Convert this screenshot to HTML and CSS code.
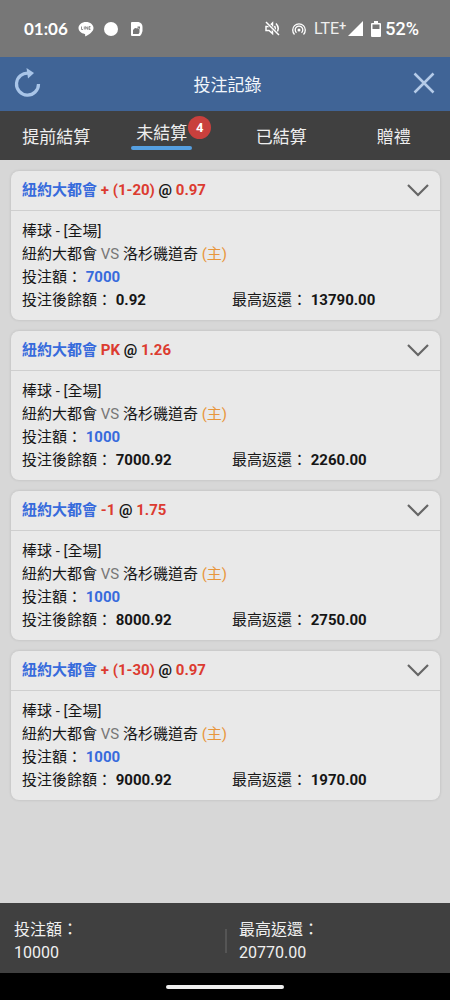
FILE: index.html
```html
<!DOCTYPE html>
<html lang="zh-Hant">
<head>
<meta charset="utf-8">
<meta name="viewport" content="width=device-width, initial-scale=1">
<title>投注記錄</title>
<link rel="stylesheet" href="styles.css">
</head>
<body>
<div class="status-bar">
  <div class="status-left">
    <span class="clock">01:06</span>
    <svg class="line-icon" width="16" height="16" viewBox="0 0 16 16"><path d="M8 1C3.800 1 .5 3.700.5 7c0 3 2.600 5.300 6.200 5.900.7.200.5.800.4 2.100.1.600.6.300 1 .1 2.500-1.400 7.400-4.300 7.400-8.100C15.500 3.700 12.200 1 8 1Z" fill="#fff"/><path d="M3.500 5.500v3H5M6.300 5.500v3M7.700 8.500v-3l2 3v-3M12.500 5.500H11v3h1.500M11 7h1.300" fill="none" stroke="#777" stroke-width=".8"/></svg>
    <svg width="14" height="14" viewBox="0 0 14 14"><circle cx="7" cy="7" r="7" fill="#fff"/></svg>
    <svg class="doc-icon" width="12" height="14" viewBox="0 0 12 14"><path d="M1 0h6.500Q11.500 1 11.500 5v4l-1 3L9 14H1a1 1 0 0 1-1-1V1a1 1 0 0 1 1-1Z" fill="#fff"/><path d="M2 8 4 6l2.500.5V4.500H9v2L8.500 8v2.500L7.500 12H2Z" fill="#777"/><path d="M6.500 5.500 9 7.500" stroke="#ddd" stroke-width=".8"/></svg>
  </div>
  <div class="status-right">
    <svg class="mute-icon" width="15" height="15" viewBox="0 0 15 15" fill="none" stroke="#fff" stroke-width="1.500"><path d="M1 5.500h3l3.500-3.500v10.500L4 9.500H1ZM9.500 5q1.500 2.500 0 5M11 2.500q4.500 5 0 10"/><path d="M1 1l13 13" stroke="#777" stroke-width="3"/><path d="M1 1l13 13"/></svg>
    <svg class="cast-icon" width="14" height="14" viewBox="0 0 14 14" fill="none" stroke="#fff" stroke-width="1.300"><path d="M2.500 12.500a6.300 6.300 0 1 1 9 0M4.500 10.700a3.800 3.800 0 1 1 5 0"/><circle cx="7" cy="8" r="1.500" fill="#fff" stroke="none"/></svg>
    <span class="network">LTE<sup>+</sup></span>
    <svg class="signal-icon" width="15" height="15" viewBox="0 0 15 15"><path d="M15 0v15H0Z" fill="#fff"/></svg>
    <svg class="battery-icon" width="10" height="16" viewBox="0 0 10 16"><path d="M3 0h4v2h2a1 1 0 0 1 1 1v12a1 1 0 0 1-1 1H1a1 1 0 0 1-1-1V3a1 1 0 0 1 1-1h2Z" fill="#fff"/><path d="M1.500 3.500h7V8h-7Z" fill="#777"/></svg>
    <span class="percent">52%</span>
  </div>
</div>

<header class="title-bar">
  <button class="icon-button" aria-label="重新整理"><svg width="28" height="30" viewBox="0 0 28 30"><path d="M15 5.200A11 11 0 1 0 24.500 16" fill="none" stroke="#a9c5e8" stroke-width="3.200"/><path d="M12.500 0l7.500 5-6 5.500Z" fill="#a9c5e8"/></svg></button>
  <h1>投注記錄</h1>
  <button class="icon-button" aria-label="關閉"><svg width="22" height="22" viewBox="0 0 22 22"><path d="M1.500 1.500l19 19M20.500 1.500l-19 19" stroke="#b5cbe8" stroke-width="2.500"/></svg></button>
</header>

<nav class="tabs">
  <button class="tab">提前結算</button>
  <button class="tab active"><span class="tab-label">未結算<span class="badge">4</span></span></button>
  <button class="tab">已結算</button>
  <button class="tab">贈禮</button>
</nav>

<main class="bets">
  <article class="bet">
    <div class="bet-head">
      <h2><span class="team">紐約大都會</span> <span class="odds">+ (1-20)</span> @ <span class="odds">0.97</span></h2>
      <button class="toggle" aria-label="展開"><svg width="22" height="13" viewBox="0 0 22 13"><path d="M1 1l10 10L21 1" fill="none" stroke="#666" stroke-width="2.200"/></svg></button>
    </div>
    <div class="bet-body">
      <p>棒球 - [全場]</p>
      <p>紐約大都會 <span class="versus">VS</span> 洛杉磯道奇 <span class="home">(主)</span></p>
      <p>投注額： <b class="stake">7000</b></p>
      <div class="amounts"><p>投注後餘額： <b>0.92</b></p><p>最高返還： <b>13790.00</b></p></div>
    </div>
  </article>
  <article class="bet">
    <div class="bet-head">
      <h2><span class="team">紐約大都會</span> <span class="odds">PK</span> @ <span class="odds">1.26</span></h2>
      <button class="toggle" aria-label="展開"><svg width="22" height="13" viewBox="0 0 22 13"><path d="M1 1l10 10L21 1" fill="none" stroke="#666" stroke-width="2.200"/></svg></button>
    </div>
    <div class="bet-body">
      <p>棒球 - [全場]</p>
      <p>紐約大都會 <span class="versus">VS</span> 洛杉磯道奇 <span class="home">(主)</span></p>
      <p>投注額： <b class="stake">1000</b></p>
      <div class="amounts"><p>投注後餘額： <b>7000.92</b></p><p>最高返還： <b>2260.00</b></p></div>
    </div>
  </article>
  <article class="bet">
    <div class="bet-head">
      <h2><span class="team">紐約大都會</span> <span class="odds">-1</span> @ <span class="odds">1.75</span></h2>
      <button class="toggle" aria-label="展開"><svg width="22" height="13" viewBox="0 0 22 13"><path d="M1 1l10 10L21 1" fill="none" stroke="#666" stroke-width="2.200"/></svg></button>
    </div>
    <div class="bet-body">
      <p>棒球 - [全場]</p>
      <p>紐約大都會 <span class="versus">VS</span> 洛杉磯道奇 <span class="home">(主)</span></p>
      <p>投注額： <b class="stake">1000</b></p>
      <div class="amounts"><p>投注後餘額： <b>8000.92</b></p><p>最高返還： <b>2750.00</b></p></div>
    </div>
  </article>
  <article class="bet">
    <div class="bet-head">
      <h2><span class="team">紐約大都會</span> <span class="odds">+ (1-30)</span> @ <span class="odds">0.97</span></h2>
      <button class="toggle" aria-label="展開"><svg width="22" height="13" viewBox="0 0 22 13"><path d="M1 1l10 10L21 1" fill="none" stroke="#666" stroke-width="2.200"/></svg></button>
    </div>
    <div class="bet-body">
      <p>棒球 - [全場]</p>
      <p>紐約大都會 <span class="versus">VS</span> 洛杉磯道奇 <span class="home">(主)</span></p>
      <p>投注額： <b class="stake">1000</b></p>
      <div class="amounts"><p>投注後餘額： <b>9000.92</b></p><p>最高返還： <b>1970.00</b></p></div>
    </div>
  </article>
</main>

<footer class="totals">
  <div class="total"><p>投注額：</p><p>10000</p></div>
  <div class="total last"><p>最高返還：</p><p>20770.00</p></div>
</footer>
<div class="gesture-bar"><div class="handle"></div></div>
</body>
</html>
```
FILE: styles.css
```css
* { box-sizing: border-box; }

body {
  margin: 0;
  min-height: 100vh;
  display: flex;
  flex-direction: column;
  background: #d7d7d7;
  color: #161616;
  font-family: Roboto, "Noto Sans CJK TC", sans-serif;
  font-size: 15px;
}

h1, h2, p { margin: 0; }
svg { display: block; flex: none; }
button {
  padding: 0;
  border: 0;
  background: none;
  color: inherit;
  font: inherit;
}

.status-bar {
  display: flex;
  justify-content: space-between;
  align-items: center;
  height: 57px;
  padding: 0 31px 0 24px;
  background: #777;
  color: #fff;
}
.status-left, .status-right { display: flex; align-items: center; }
.clock { font-family: Lato, sans-serif; font-size: 17px; font-weight: 700; }
.status-left { gap: 10px; }
.doc-icon { margin-left: 3px; }
.cast-icon { margin-left: 12px; }
.network { margin-left: 8px; font-size: 16px; line-height: 20px; color: #eee; }
.network sup { font-size: 13px; line-height: 0; vertical-align: 4px; font-weight: 500; }
.signal-icon { margin-left: 2px; }
.battery-icon { margin-left: 8px; }
.percent { margin-left: 4px; font-size: 18px; font-weight: 500; }

.title-bar {
  display: flex;
  justify-content: space-between;
  align-items: center;
  height: 54px;
  padding: 0 15px 2px 14px;
  background: #406496;
  color: #f2f6fb;
}
.title-bar h1 { font-size: 17px; font-weight: 400; }
.icon-button { display: flex; align-items: center; }

.tabs {
  display: grid;
  grid-template-columns: repeat(4, 1fr);
  height: 49px;
  background: #404040;
  color: #eee;
  font-size: 17px;
}
.active { padding: 0 14px 5px 0; }
.tab-label {
  position: relative;
  display: inline-block;
  padding: 0 5px;
  line-height: 28px;
}
.tab-label::after {
  content: "";
  position: absolute;
  left: 0;
  right: 0;
  bottom: -3px;
  height: 4px;
  border-radius: 2px;
  background: #559fe0;
}
.badge {
  position: absolute;
  top: -3px;
  left: 57px;
  width: 23px;
  height: 23px;
  border-radius: 50%;
  background: #c9403d;
  color: #fff;
  font-size: 13px;
  font-weight: 700;
  line-height: 23px;
}

.bets {
  flex: 1;
  display: flex;
  flex-direction: column;
  gap: 11px;
  padding: 11px 10px 11px 11px;
}
.bet {
  border-radius: 8px;
  background: #e9e9e9;
  box-shadow: 0 0 3px rgba(0, 0, 0, 0.14);
}
.bet-head {
  display: flex;
  justify-content: space-between;
  align-items: center;
  height: 40px;
  padding: 0 11px;
  border-bottom: 1px solid #cfcfcf;
}
.bet-head h2 { font-size: 15px; font-weight: 700; line-height: 23px; }
.team, .stake { color: #376bdc; }
.odds { color: #dc3b30; }
.bet-body { padding: 9px 11px 8px; line-height: 23px; }
.bet-body b { font-weight: 700; }
.versus { color: #777; }
.home { color: #e8963c; }
.amounts { display: grid; grid-template-columns: 210px 1fr; }

.totals {
  display: grid;
  grid-template-columns: 1fr 1fr;
  align-items: center;
  height: 70px;
  padding-top: 6px;
  background: #404040;
  color: #f0f0f0;
  font-size: 16px;
  line-height: 23px;
}
.total { padding-left: 14px; }
.last { background: linear-gradient(#555, #555) left center / 2px 24px no-repeat; }
.gesture-bar {
  display: flex;
  justify-content: center;
  align-items: center;
  height: 27px;
  background: #000;
}
.handle { width: 118px; height: 4px; border-radius: 2px; background: #eee; }
```
